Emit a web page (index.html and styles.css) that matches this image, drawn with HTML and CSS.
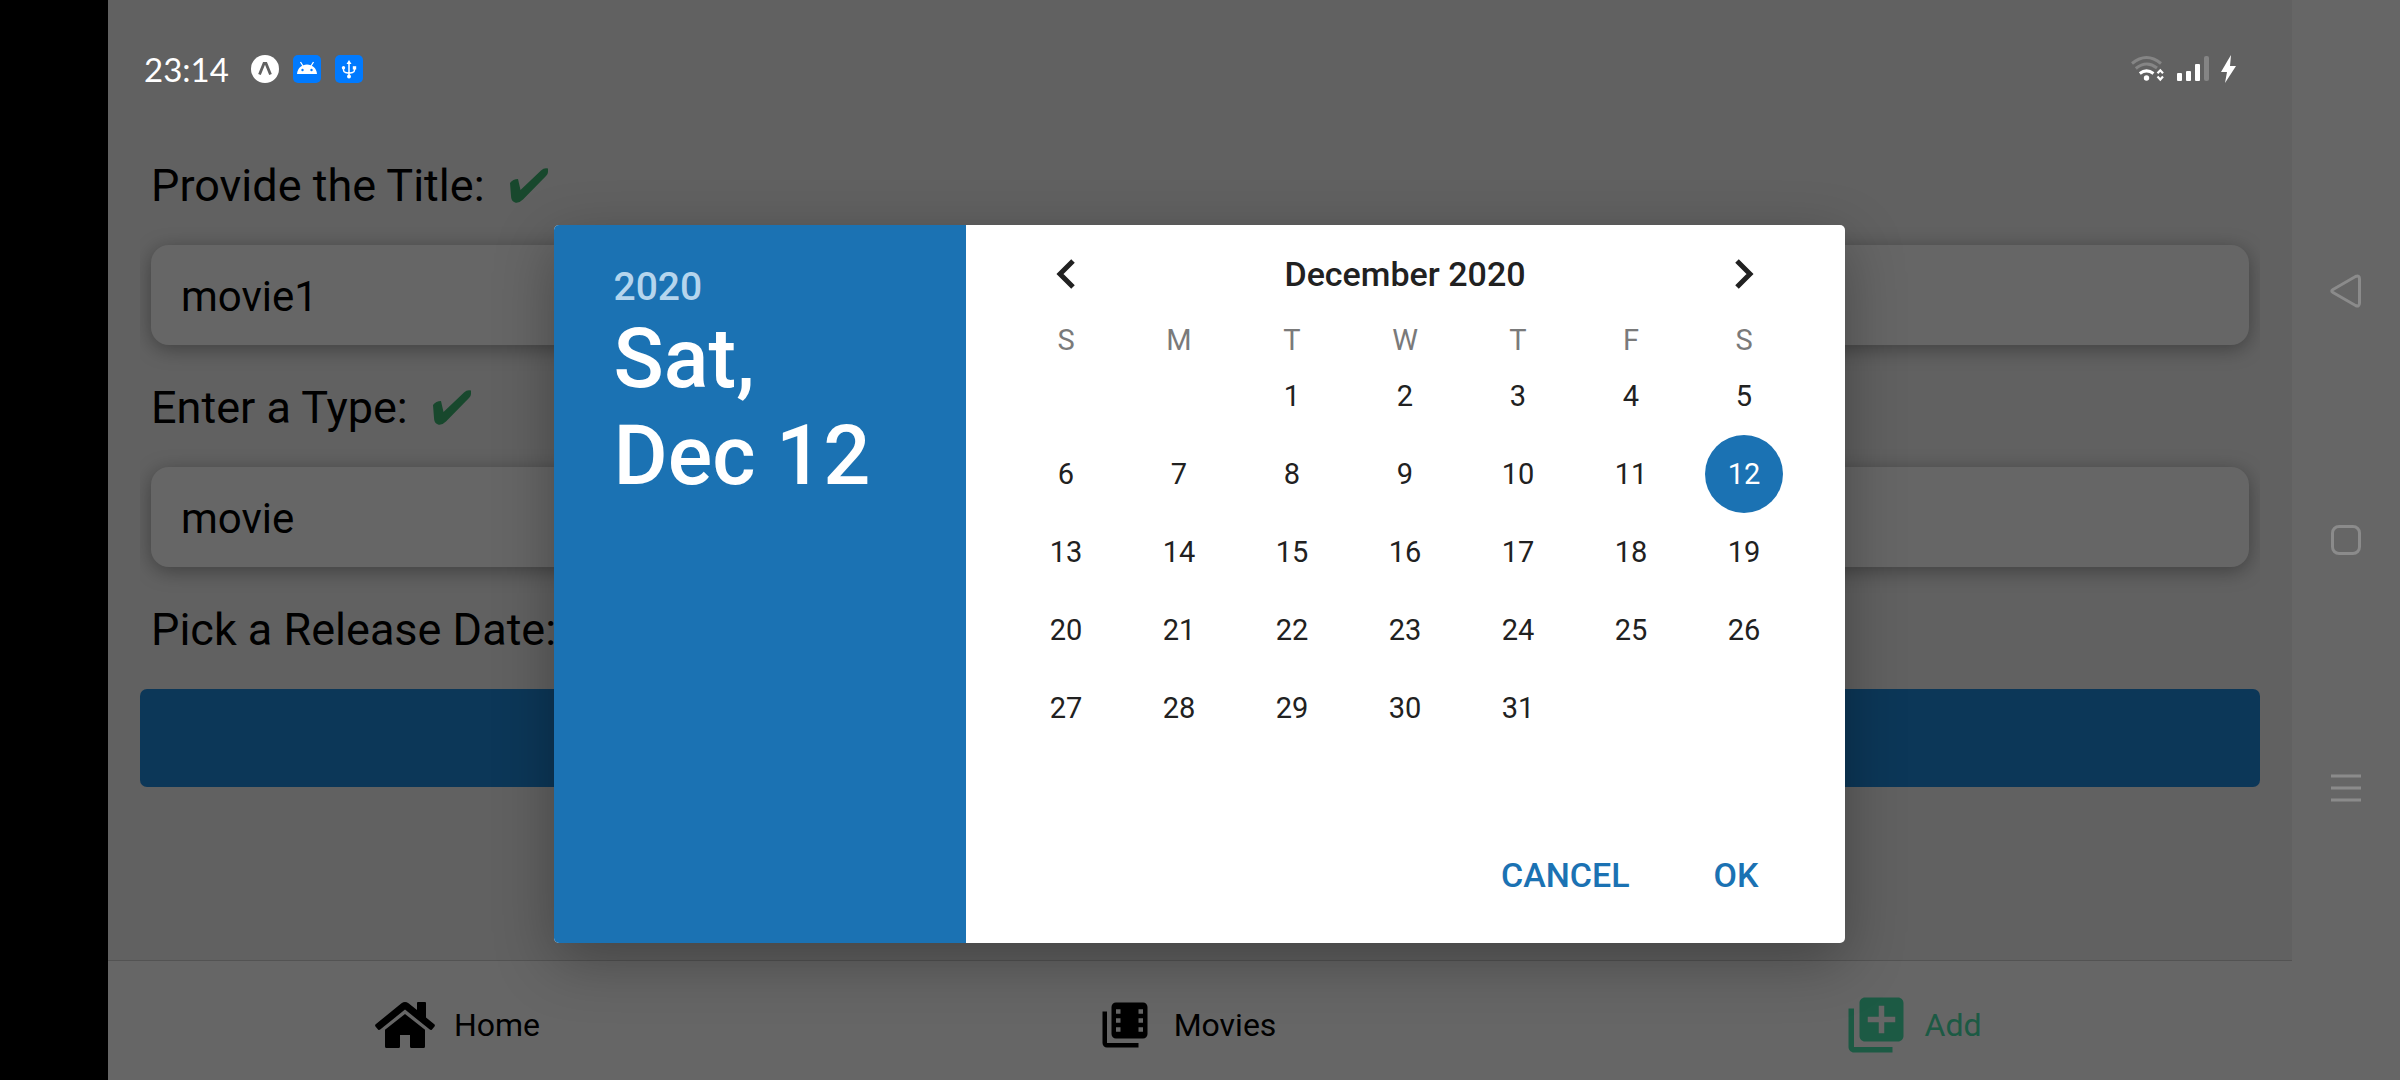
FILE: index.html
```html
<!DOCTYPE html>
<html lang="en">
<head>
<meta charset="utf-8">
<meta name="viewport" content="width=device-width, initial-scale=1">
<title>Add a movie</title>
<link rel="stylesheet" href="styles.css">
</head>
<body>
<div class="device">
  <div class="cutout"></div>

  <div class="app">
    <header class="status">
      <div class="status-group">
        <time class="clock">23:14</time>
        <svg class="badge" viewBox="0 0 28 28" aria-hidden="true"><circle cx="14" cy="14" r="14" fill="#fff"/><path d="M8.500 19.500 13 8.500h2l4.500 11" fill="none" stroke="#616161" stroke-width="2.800"/></svg>
        <svg class="badge" viewBox="0 0 28 28" aria-hidden="true"><rect width="28" height="28" rx="5" fill="#007aff"/><path d="M4 19C4.500 13 9 9.500 14 9.500S23.500 13 24 19z" fill="#fff"/><path d="M10 11 7.500 7M18 11l2.500-4" stroke="#fff" stroke-width="1.300"/><circle cx="9.500" cy="15" r="1.200" fill="#007aff"/><circle cx="18.500" cy="15" r="1.200" fill="#007aff"/></svg>
        <svg class="badge" viewBox="0 0 28 28" aria-hidden="true"><rect width="28" height="28" rx="5" fill="#007aff"/><path d="M14 8v13M8.500 13v2q0 2 2 2.500l3.500.8 3.500-.8q2-.5 2-2.500v-2" fill="none" stroke="#fff" stroke-width="1.500"/><path d="M14 5l2.500 4h-5z" fill="#fff"/><circle cx="14" cy="21.500" r="2" fill="#fff"/><circle cx="8.500" cy="12.800" r="1.700" fill="#fff"/><path d="M17.800 11.200h3.400v3.300h-3.400z" fill="#fff"/></svg>
      </div>
      <div class="status-icons">
        <svg width="35" height="28" viewBox="0 0 35 28" aria-label="Wi-Fi" role="img">
          <g fill="none" stroke-width="3"><path d="M1 8.500Q15.500-3.500 30 8.500" stroke="#858585"/><path d="M4.800 13.500Q15.500 4.800 26 13" stroke="#858585"/><path d="M8.800 18.500Q15.500 13.300 22.500 18.500" stroke="#fff"/></g>
          <circle cx="15.500" cy="23" r="2.700" fill="#fff"/>
          <path d="M26.500 18.300 29.300 15.300 32 18.300M26.500 21.500 29.300 24.500 32 21.500" fill="none" stroke="#fff" stroke-width="2.200"/>
        </svg>
        <svg width="32" height="28" viewBox="0 0 32 28" aria-label="Signal" role="img">
          <g fill="#fff"><rect y="18" width="5" height="8" rx="1"/><rect x="9" y="16" width="5" height="10" rx="1"/><rect x="18" y="9" width="5" height="17" rx="1"/></g><rect x="27" y="1" width="5" height="25" rx="2" fill="#858585"/>
        </svg>
        <svg width="17" height="28" viewBox="0 0 17 28" aria-label="Charging" role="img"><path d="M8 5 11 0 10 11h6L5 28 7 17H1z" fill="#fff"/></svg>
      </div>
    </header>

    <form class="form">
      <label class="label" for="title">Provide the Title: <svg class="check" viewBox="0 0 38 35" aria-hidden="true"><path d="M0 15Q3 11 8 11L10.500 22 31 2.500Q34-.5 38 .5V4Q38 6 36 8L13 31.500Q9 35.500 5 34.500 1 33 1 28z"/></svg></label>
      <input class="field" id="title" type="text" value="movie1">
      <label class="label" for="type">Enter a Type: <svg class="check" viewBox="0 0 38 35" aria-hidden="true"><path d="M0 15Q3 11 8 11L10.500 22 31 2.500Q34-.5 38 .5V4Q38 6 36 8L13 31.500Q9 35.500 5 34.500 1 33 1 28z"/></svg></label>
      <input class="field" id="type" type="text" value="movie">
      <label class="label" for="release">Pick a Release Date:</label>
      <button class="pick" id="release" type="button" aria-label="Pick a date"></button>
    </form>

    <nav class="tabs">
      <a class="tab" href="#home">
        <span class="tab-icon"><svg width="60" height="46" viewBox="0 0 60 46" aria-hidden="true"><path d="M26.500 1.200Q30-1.200 33.500 1.200L42 8V1Q42 0 43 0H50Q51 0 51 1V15.500L59.300 22.300Q60.400 23.300 59.500 24.400L57 27.400Q56 28.500 54.800 27.500L30 7.600 5.200 27.500Q4 28.500 3 27.400L.5 24.400Q-.4 23.300.7 22.300z"/><path d="M30 12 50 27.800V44.500Q50 46 48.500 46H36.500Q35 46 35 44.500V33H25V44.500Q25 46 23.500 46H11.500Q10 46 10 44.500V27.800z"/></svg></span>
        Home
      </a>
      <a class="tab" href="#movies">
        <span class="tab-icon"><svg width="54" height="54" viewBox="0 0 24 24" aria-hidden="true"><path d="M4 6H2v14c0 1.100.9 2 2 2h14v-2H4z"/><path fill-rule="evenodd" d="M20 2H8c-1.100 0-2 .9-2 2v12c0 1.100.9 2 2 2h12c1.100 0 2-.9 2-2V4c0-1.100-.9-2-2-2zM8 5h2v2H8zM8 9h2v2H8zM8 13h2v2H8zM18 5h2v2h-2zM18 9h2v2h-2zM18 13h2v2h-2z"/></svg></span>
        Movies
      </a>
      <a class="tab tab-active" href="#add" aria-current="page">
        <span class="tab-icon"><svg width="66" height="66" viewBox="0 0 24 24" aria-hidden="true"><path d="M4 6H2v14c0 1.100.9 2 2 2h14v-2H4V6zm16-4H8c-1.100 0-2 .9-2 2v12c0 1.100.9 2 2 2h12c1.100 0 2-.9 2-2V4c0-1.100-.9-2-2-2zm-1 9h-4v4h-2v-4H9V9h4V5h2v4h4v2z"/></svg></span>
        Add
      </a>
    </nav>

    <div class="scrim">
      <section class="dialog" role="dialog" aria-label="Choose a date">
        <div class="summary">
          <button class="year" type="button">2020</button>
          <h1 class="date">Sat,<br>Dec 12</h1>
        </div>
        <div class="picker">
          <div class="month-bar">
            <button class="arrow" type="button" aria-label="Previous month"><svg width="20" height="30" viewBox="0 0 20 30" aria-hidden="true"><path d="M17 2 4 15l13 13"/></svg></button>
            <h2 class="month">December 2020</h2>
            <button class="arrow" type="button" aria-label="Next month"><svg width="20" height="30" viewBox="0 0 20 30" aria-hidden="true"><path d="M3 2l13 13L3 28"/></svg></button>
          </div>
          <table class="calendar">
            <thead><tr><th>S</th><th>M</th><th>T</th><th>W</th><th>T</th><th>F</th><th>S</th></tr></thead>
            <tbody>
              <tr><td></td><td></td><td><button class="day" type="button">1</button></td><td><button class="day" type="button">2</button></td><td><button class="day" type="button">3</button></td><td><button class="day" type="button">4</button></td><td><button class="day" type="button">5</button></td></tr>
              <tr><td><button class="day" type="button">6</button></td><td><button class="day" type="button">7</button></td><td><button class="day" type="button">8</button></td><td><button class="day" type="button">9</button></td><td><button class="day" type="button">10</button></td><td><button class="day" type="button">11</button></td><td><button class="day day-selected" type="button" aria-pressed="true">12</button></td></tr>
              <tr><td><button class="day" type="button">13</button></td><td><button class="day" type="button">14</button></td><td><button class="day" type="button">15</button></td><td><button class="day" type="button">16</button></td><td><button class="day" type="button">17</button></td><td><button class="day" type="button">18</button></td><td><button class="day" type="button">19</button></td></tr>
              <tr><td><button class="day" type="button">20</button></td><td><button class="day" type="button">21</button></td><td><button class="day" type="button">22</button></td><td><button class="day" type="button">23</button></td><td><button class="day" type="button">24</button></td><td><button class="day" type="button">25</button></td><td><button class="day" type="button">26</button></td></tr>
              <tr><td><button class="day" type="button">27</button></td><td><button class="day" type="button">28</button></td><td><button class="day" type="button">29</button></td><td><button class="day" type="button">30</button></td><td><button class="day" type="button">31</button></td><td></td><td></td></tr>
              <tr><td></td><td></td><td></td><td></td><td></td><td></td><td></td></tr>
            </tbody>
          </table>
          <div class="actions">
            <button class="action" type="button">CANCEL</button>
            <button class="action" type="button">OK</button>
          </div>
        </div>
      </section>
    </div>
  </div>

  <div class="system-nav">
    <button class="system-key" type="button" aria-label="Back"><svg width="34" height="34" viewBox="0 0 34 34" aria-hidden="true"><path d="M4 15.500 26.500 2.500Q30.500 1 30.500 5V29Q30.500 33 26.500 31.500L4 18.500Q1.500 17 4 15.500z"/></svg></button>
    <button class="system-key" type="button" aria-label="Home"><svg width="34" height="34" viewBox="0 0 34 34" aria-hidden="true"><rect x="3.500" y="3.500" width="27" height="27" rx="6.500"/></svg></button>
    <button class="system-key" type="button" aria-label="Menu"><svg width="34" height="34" viewBox="0 0 34 34" aria-hidden="true"><path d="M2 4h30M2 16h30M2 28h30"/></svg></button>
  </div>
</div>
</body>
</html>
```
FILE: styles.css
```css
* {
  box-sizing: border-box;
}

body {
  margin: 0;
  background: #000;
  color: #000;
  font-family: Roboto, "Liberation Sans", sans-serif;
}

button,
input {
  margin: 0;
  padding: 0;
  border: 0;
  background: none;
  color: inherit;
  font: inherit;
}

svg {
  display: block;
}

.device {
  display: grid;
  grid-template-columns: 108px 1fr 108px;
  min-height: 100vh;
}

.app {
  position: relative;
  display: flex;
  flex-direction: column;
  background: #f2f2f2;
}

/* Status bar stays bright above the scrim */
.status {
  position: relative;
  z-index: 2;
  display: flex;
  justify-content: space-between;
  align-items: flex-end;
  height: 88px;
  padding: 0 55px 5px 36px;
}

.status-group,
.status-icons {
  display: flex;
  align-items: center;
  height: 28px;
}

.status-group {
  gap: 14px;
}

.status-icons {
  gap: 11px;
}

.clock {
  margin-right: 8px;
  color: #fff;
  font-family: Lato, Roboto, sans-serif;
  font-size: 33px;
  line-height: 28px;
}

.badge {
  width: 28px;
  height: 28px;
}

/* Form */
.form {
  flex: 1;
  display: flex;
  flex-direction: column;
  margin: 0 32px;
  padding-top: 71px;
  overflow-x: clip;
}

.label {
  display: flex;
  align-items: center;
  gap: 25px;
  margin: 0 11px 33px;
  font-size: 45px;
  line-height: 53px;
}

.check {
  width: 38px;
  height: 35px;
  fill: #3cb371;
}

.field {
  height: 100px;
  margin: 0 11px 36px;
  padding: 2px 30px 0;
  border-radius: 18px;
  background: #fff;
  box-shadow: 0 4px 20px rgba(0, 0, 0, 0.35);
  font-size: 42px;
}

.pick {
  height: 98px;
  border-radius: 7px;
  background: #2089dc;
}

/* Tab bar */
.tabs {
  display: grid;
  grid-template-columns: repeat(3, 1fr);
  height: 120px;
  border-top: 1px solid #d0d0d0;
  background: #fff;
}

.tab {
  display: flex;
  align-items: center;
  justify-content: center;
  gap: 16px;
  padding: 8px 32px 0 0;
  color: #000;
  font-size: 32px;
  text-decoration: none;
}

.tab-icon {
  display: flex;
  justify-content: center;
  width: 66px;
  fill: currentColor;
}

.tab-active {
  color: #48e0aa;
}

/* Date dialog */
.scrim {
  position: absolute;
  inset: 0;
  z-index: 1;
  display: flex;
  align-items: center;
  justify-content: center;
  padding: 88px 2px 0 0;
  background: rgba(0, 0, 0, 0.6);
}

.dialog {
  display: flex;
  width: 1291px;
  max-width: 100%;
  border-radius: 5px;
  overflow: hidden;
  background: #fff;
  box-shadow: 0 18px 60px rgba(0, 0, 0, 0.3);
}

.summary {
  flex: 0 0 412px;
  padding: 39px 60px;
  background: #1b72b3;
  color: #fff;
}

.year {
  display: block;
  color: #b5d5ed;
  font-size: 39px;
  font-weight: 500;
  line-height: 46px;
}

.date {
  margin: 0;
  font-size: 83px;
  font-weight: 500;
  line-height: 97px;
}

.picker {
  flex: 1;
  padding: 0 44px 18px;
  color: #212121;
}

.month-bar {
  display: flex;
  align-items: center;
  justify-content: space-between;
  height: 98px;
}

.arrow {
  display: flex;
  justify-content: center;
  width: 113px;
}

.arrow path {
  fill: none;
  stroke: #212121;
  stroke-width: 5;
}

.month {
  margin: 0;
  font-size: 34px;
  font-weight: 500;
}

.calendar {
  width: 100%;
  table-layout: fixed;
  border-collapse: collapse;
  font-size: 29px;
  text-align: center;
}

.calendar th {
  height: 34px;
  padding: 0;
  color: #7a7a7a;
  font-weight: 400;
  line-height: 34px;
}

.calendar td {
  height: 78px;
  padding: 0;
}

.day {
  display: block;
  width: 78px;
  height: 78px;
  margin: 0 auto;
  border-radius: 50%;
}

.day-selected {
  background: #1b72b3;
  color: #fff;
}

.actions {
  display: flex;
  justify-content: flex-end;
}

.action {
  height: 100px;
  padding: 0 42px;
  color: #1b72b3;
  font-size: 34px;
  font-weight: 500;
}

/* System navigation */
.system-nav {
  display: grid;
  grid-template-rows: repeat(3, 1fr);
  padding: 166px 0;
  background: #666;
}

.system-key {
  display: flex;
  align-items: center;
  justify-content: center;
}

.system-key svg {
  fill: none;
  stroke: #8b8b8b;
  stroke-width: 3;
}
```
